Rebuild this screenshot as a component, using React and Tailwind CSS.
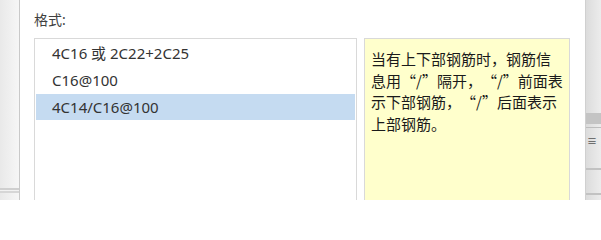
import React from 'react';

const items = ['4C16 或 2C22+2C25', 'C16@100', '4C14/C16@100'];

const FormatPanel = () => {
  const selected = 2;

  return (
    <div className="flex h-[200px] w-[601px] overflow-hidden bg-white font-['Noto_Sans','Noto_Sans_CJK_SC',sans-serif]" lang="zh-CN">
      {/* window behind, left */}
      <div className="flex w-[19px] flex-col bg-gradient-to-r from-[#e9e9e9] to-[#f6f6f6]">
        <div className="flex-1" />
        <div className="h-[2px] bg-[#cfcfcf]" />
        <div className="h-[1px] bg-[#f2f2f2]" />
        <div className="h-[2px] bg-[#d6d6d6]" />
        <div className="h-[7px]" />
      </div>
      <div className="w-[1px] bg-[#c9c9c9]" />

      {/* dialog */}
      <div className="flex flex-1 flex-col bg-white pl-[14px] pr-[15px]">
        <div className="pt-[10px] text-[14px] leading-[19px] text-[#404040]">格式:</div>
        <div className="mt-[9px] flex flex-1 gap-[7px]">
          <div className="flex w-[323px] flex-col border border-b-0 border-[#d9d9d9] px-[1px] pt-[1px]">
            {items.map((item, i) => (
              <div
                key={item}
                className={
                  i === selected
                    ? 'flex h-[26px] items-center bg-[#c5dbf1] pl-[16px] text-[15px] text-[#333]'
                    : 'flex h-[27px] items-center pl-[16px] text-[15px] text-[#333]'
                }
              >
                {item}
              </div>
            ))}
          </div>
          <div className="w-[206px] border border-b-0 border-[#d9d9d9] bg-[#ffffcc] pl-[6px] pr-[5px] pt-[9px] font-['Noto_Sans_CJK_SC',sans-serif] text-[15px] leading-[21.5px] text-[#1a1a1a] [text-spacing-trim:space-all]">
            当有上下部钢筋时，钢筋信息用“/”隔开，“/”前面表示下部钢筋，“/”后面表示上部钢筋。
          </div>
        </div>
      </div>

      {/* window behind, right */}
      <div className="w-[1px] bg-[#d0d0d0]" />
      <div className="flex w-[15px] flex-col bg-gradient-to-r from-[#dcdcdc] to-[#ececec]">
        <div className="h-[113px]" />
        <div className="h-[11px] bg-[#c4c4c4]" />
        <div className="h-[3px]" />
        <div className="h-[1px] bg-[#bdbdbd]" />
        <div className="flex h-[26px] items-center pl-[1px] text-[10px] leading-none text-[#555]">≡</div>
        <div className="h-[14px]" />
        <div className="h-[2px] bg-[#c2c2c2]" />
        <div className="flex-1" />
        <div className="h-[2px] bg-[#c2c2c2]" />
        <div className="h-[5px]" />
      </div>
    </div>
  );
};

export default function App() {
  return <FormatPanel />;
}
